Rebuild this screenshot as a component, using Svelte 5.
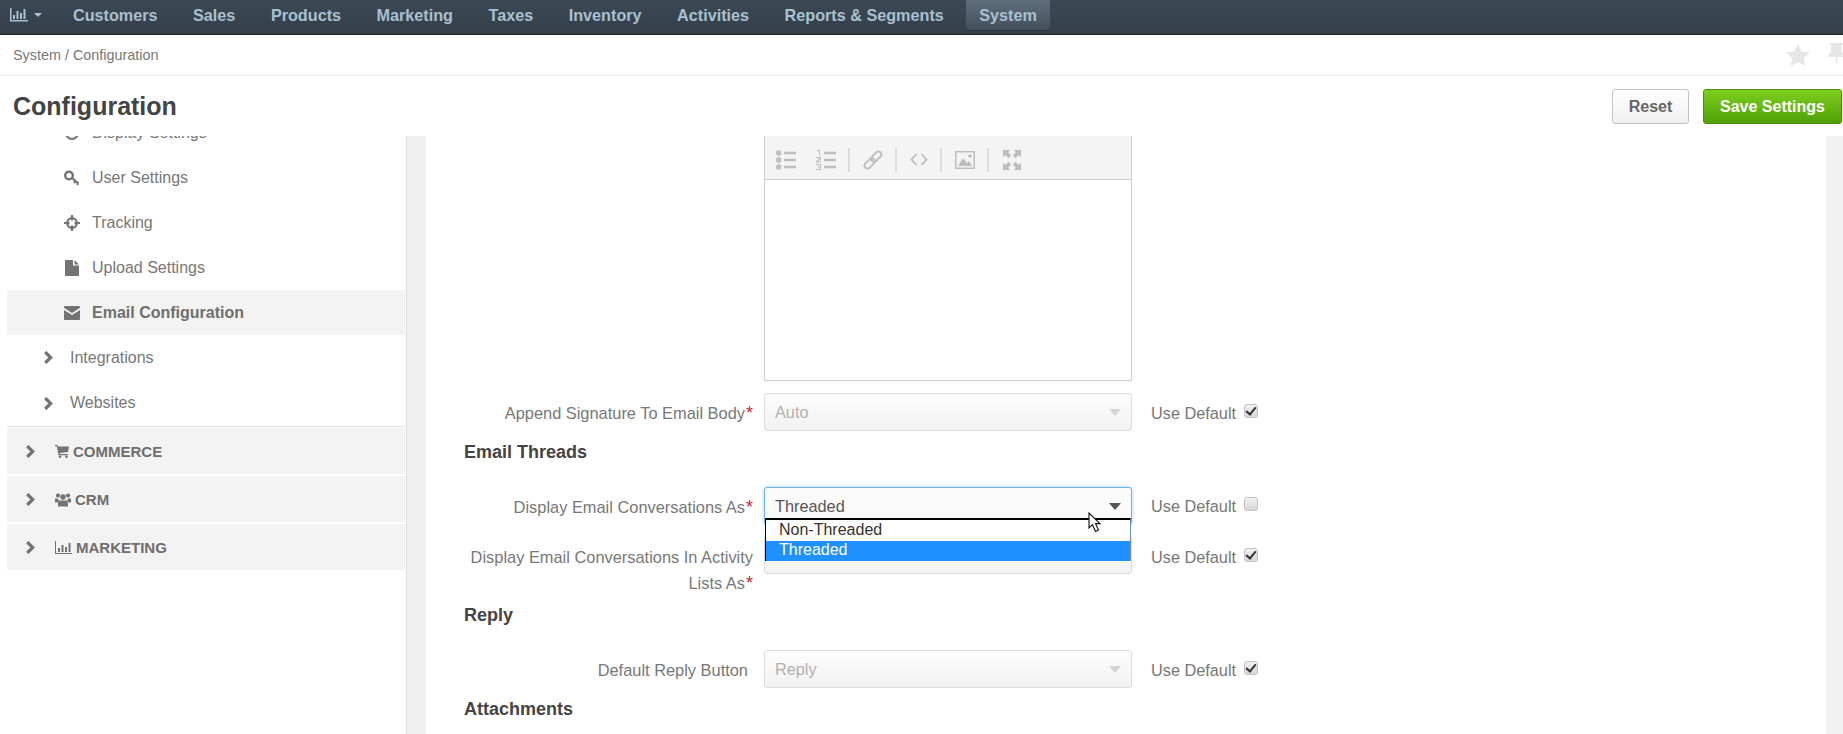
<script>
  const nav = ['Customers', 'Sales', 'Products', 'Marketing', 'Taxes', 'Inventory', 'Activities', 'Reports & Segments'];
</script>

<div class="page">
  <header class="topbar">
    <div class="brand">
      <svg width="19" height="16" viewBox="0 0 19 16" aria-hidden="true"><path d="M1 1h1.500v12H19v1.500H1z M4 8h2v4H4z M7.500 4h2v8h-2z M11 6h2v6h-2z M14.500 2h2v10h-2z" fill="#a9c2d3"/></svg>
      <span class="caret"></span>
    </div>
    <nav class="nav">
      {#each nav as item}
        <a class="nav-item">{item}</a>
      {/each}
      <a class="nav-item active">System</a>
    </nav>
  </header>

  <div class="crumbs">
    <span>System / Configuration</span>
    <div class="crumb-icons">
      <svg width="24" height="22" viewBox="0 0 24 22" aria-hidden="true"><path d="M12 0l3.500 7.400 8.200 1-6 5.600 1.600 8L12 18l-7.300 4 1.600-8-6-5.600 8.200-1z" fill="#e6e6e6"/></svg>
      <svg class="pin" width="16" height="24" viewBox="0 0 16 24" aria-hidden="true"><path d="M3 0h12v2h-1.500v7c2 1 3 3 3 5H9.500l-1 9-1-9H0c0-2 1-4 3-5V2H1.500V0z" fill="#e6e6e6"/></svg>
    </div>
  </div>

  <div class="titlebar">
    <h1>Configuration</h1>
    <div class="actions">
      <button class="btn reset">Reset</button>
      <button class="btn save">Save Settings</button>
    </div>
  </div>

  <div class="main">
    <aside class="sidebar">
      <div class="tree">
        <div class="leaf">
          <svg width="16" height="16" viewBox="0 0 16 16" aria-hidden="true"><circle cx="8" cy="8" r="6" fill="none" stroke="#737373" stroke-width="2"/></svg>
          <span>Display Settings</span>
        </div>
        <div class="leaf">
          <svg width="16" height="16" viewBox="0 0 16 16" aria-hidden="true"><circle cx="5" cy="5.500" r="3.800" fill="none" stroke="#737373" stroke-width="2.400"/><path d="M8 8l6.500 5.500M11.500 11l-1.500 2M14 13.300l-1 1.500" fill="none" stroke="#737373" stroke-width="2.200"/></svg>
          <span>User Settings</span>
        </div>
        <div class="leaf">
          <svg width="16" height="16" viewBox="0 0 16 16" aria-hidden="true"><circle cx="8" cy="8" r="4.800" fill="none" stroke="#737373" stroke-width="2.200"/><path d="M8 0v5.500M8 10.500V16M0 8h5.500M10.500 8H16" stroke="#737373" stroke-width="2.200"/></svg>
          <span>Tracking</span>
        </div>
        <div class="leaf">
          <svg width="16" height="16" viewBox="0 0 16 16" aria-hidden="true"><path d="M1 0h8v5.500h6V16H1zM10.500 0L15 4.500h-4.500z" fill="#737373"/></svg>
          <span>Upload Settings</span>
        </div>
        <div class="leaf current">
          <svg width="16" height="14" viewBox="0 0 16 14" aria-hidden="true"><path d="M1 0h14c.6 0 1 .4 1 1v.800L8 7 0 1.800V1c0-.6.4-1 1-1zM0 4l8 5 8-5v9c0 .6-.4 1-1 1H1c-.6 0-1-.4-1-1z" fill="#737373"/></svg>
          <span>Email Configuration</span>
        </div>
        <div class="branch">
          <svg class="chev" width="11" height="13" viewBox="0 0 10 12" aria-hidden="true"><path d="M2 1l5 5-5 5" fill="none" stroke="#737373" stroke-width="3"/></svg>
          <span>Integrations</span>
        </div>
        <div class="branch">
          <svg class="chev" width="11" height="13" viewBox="0 0 10 12" aria-hidden="true"><path d="M2 1l5 5-5 5" fill="none" stroke="#737373" stroke-width="3"/></svg>
          <span>Websites</span>
        </div>
      </div>

      <div class="section">
        <svg class="chev" width="11" height="13" viewBox="0 0 10 12" aria-hidden="true"><path d="M2 1l5 5-5 5" fill="none" stroke="#737373" stroke-width="3"/></svg>
        <svg class="sec-icon" width="14" height="13" viewBox="0 0 14 13" aria-hidden="true"><path d="M0 0h2.500l.5 1.500h11L13 7l-8.500 1 .3 1H13v1.300H3.500L1.800 1.300H0z" fill="#737373"/><circle cx="5" cy="11.700" r="1.300" fill="#737373"/><circle cx="11.500" cy="11.700" r="1.300" fill="#737373"/></svg>
        <span>COMMERCE</span>
      </div>
      <div class="section">
        <svg class="chev" width="11" height="13" viewBox="0 0 10 12" aria-hidden="true"><path d="M2 1l5 5-5 5" fill="none" stroke="#737373" stroke-width="3"/></svg>
        <svg class="sec-icon crm" width="16" height="15" viewBox="0 0 16 14" aria-hidden="true"><circle cx="3" cy="3" r="2.100" fill="#737373"/><circle cx="13" cy="3" r="2.100" fill="#737373"/><circle cx="8" cy="4.500" r="2.700" fill="#737373"/><path d="M0 6h3l1 3v1H0zM16 6h-3l-1 3v1h4zM4 8h8l1 3v3H3v-3z" fill="#737373"/></svg>
        <span>CRM</span>
      </div>
      <div class="section">
        <svg class="chev" width="11" height="13" viewBox="0 0 10 12" aria-hidden="true"><path d="M2 1l5 5-5 5" fill="none" stroke="#737373" stroke-width="3"/></svg>
        <svg class="sec-icon mkt" width="17" height="13" viewBox="0 0 17 13" aria-hidden="true"><path d="M0 0h1v12h16v1H0zM3 7h2v4H3zM6.500 4h2v7h-2zM10 6h2v5h-2zM13.500 2h2v9h-2z" fill="#737373"/></svg>
        <span>MARKETING</span>
      </div>
    </aside>

    <div class="splitter"></div>

    <section class="content">
      <div class="editor">
        <div class="toolbar">
          <svg class="t-icon" width="20" height="20" viewBox="0 0 20 20" aria-hidden="true"><circle cx="2.700" cy="3" r="2.700"/><circle cx="2.700" cy="10" r="2.700"/><circle cx="2.700" cy="17" r="2.700"/><path d="M8 1.700h12v2.600H8zM8 8.700h12v2.600H8zM8 15.700h12v2.600H8z"/></svg>
          <svg class="t-icon" width="20" height="20" viewBox="0 0 20 20" aria-hidden="true"><path d="M8 1.700h12v2.600H8zM8 8.700h12v2.600H8zM8 15.700h12v2.600H8zM1 0h3v5.500H3V1H1zM0 7h5v2.200L2 11.500h3v1H0v-1.300L3.800 8.300V8H0zM0 14h5v6H0v-1h3.800v-1.500H1.500v-1h2.300V15H0z"/></svg>
          <i class="sep"></i>
          <svg class="t-icon link" width="22" height="22" viewBox="0 0 22 22" aria-hidden="true"><g fill="none" stroke="#bdbdbd" stroke-width="1.800"><rect x="-5" y="-3" width="12" height="6" rx="3" transform="translate(7 15) rotate(-45)"/><rect x="-7" y="-3" width="12" height="6" rx="3" transform="translate(15 7) rotate(-45)"/></g></svg>
          <i class="sep"></i>
          <svg class="t-icon code" width="18" height="13" viewBox="0 0 18 13" aria-hidden="true"><path d="M6.500 1L1.500 6.500l5 5.500M11.500 1l5 5.500-5 5.500" fill="none" stroke="#bdbdbd" stroke-width="1.800"/></svg>
          <i class="sep"></i>
          <svg class="t-icon" width="20" height="18" viewBox="0 0 20 18" aria-hidden="true"><path fill-rule="evenodd" d="M0 0h20v18H0zM1.500 1.500v15h17v-15z"/><path d="M3 15l5-8 4 5 2-2 3 5z"/><circle cx="15" cy="5" r="1.800"/></svg>
          <i class="sep"></i>
          <svg class="t-icon" width="20" height="20" viewBox="0 0 20 22" aria-hidden="true"><path d="M0 0h8L5.800 2.200 9 6 6 9 2.500 5.500 0 8zM20 0h-8l2.200 2.200L11 6l3 3 3.500-3.500L20 8zM0 22h8l-2.200-2.200L9 16l-3-3-3.500 3.500L0 14zM20 22h-8l2.200-2.200L11 16l3-3 3.500 3.500L20 14z"/></svg>
        </div>
        <div class="edit-area"></div>
      </div>

      <div class="row first">
        <label class="lbl">Append Signature To Email Body<em>*</em></label>
        <div class="select disabled"><span>Auto</span><i class="arrow"></i></div>
        <div class="default">Use Default<span class="check on"></span></div>
      </div>

      <h3>Email Threads</h3>

      <div class="row tight">
        <label class="lbl">Display Email Conversations As<em>*</em></label>
        <div class="select focus">
          <span>Threaded</span><i class="arrow"></i>
          <div class="popup">
            <div class="opt">Non-Threaded</div>
            <div class="opt sel">Threaded</div>
          </div>
          <svg class="cursor" width="14" height="21" viewBox="0 0 14 21" aria-hidden="true"><path d="M1 1v15l3.500-3.300L7.500 19.500l3-1.400-3-6.500H12z" fill="#fff" stroke="#111" stroke-width="1.100"/></svg>
        </div>
        <div class="default">Use Default<span class="check"></span></div>
      </div>

      <div class="row wrapped">
        <label class="lbl">Display Email Conversations In Activity<br />Lists As<em>*</em></label>
        <div class="select disabled"></div>
        <div class="default">Use Default<span class="check on"></span></div>
      </div>

      <h3>Reply</h3>

      <div class="row">
        <label class="lbl plain">Default Reply Button</label>
        <div class="select disabled"><span>Reply</span><i class="arrow"></i></div>
        <div class="default">Use Default<span class="check on"></span></div>
      </div>

      <h3>Attachments</h3>
    </section>

    <div class="rail"></div>
  </div>
</div>

<style>
  :global(body) {
    margin: 0;
    background: #fff;
    font-family: "Liberation Sans", Arial, sans-serif;
  }
  .page {
    display: flex;
    flex-direction: column;
    height: 734px;
    width: 1843px;
    overflow: hidden;
    color: #777;
  }
  .topbar {
    display: flex;
    align-items: flex-start;
    height: 34px;
    flex: none;
    background: linear-gradient(#3b4853, #343f4a);
    border-bottom: 1px solid #20282f;
  }
  .brand {
    display: flex;
    align-items: center;
    gap: 6px;
    width: 60px;
    height: 30px;
    padding-left: 9px;
    box-sizing: border-box;
  }
  .caret {
    width: 0;
    height: 0;
    border: 4px solid transparent;
    border-top: 4px solid #a9c2d3;
    border-bottom: 0;
  }
  .nav {
    display: flex;
    align-items: center;
    height: 30px;
    gap: 9.500px;
  }
  .nav-item {
    padding: 0 13px;
    font-size: 16.200px;
    font-weight: 700;
    color: #a8c0d1;
    line-height: 30px;
    white-space: nowrap;
  }
  .nav-item.active {
    background: linear-gradient(#5f6e7c, #434f5b);
    box-shadow: 0 1px 0 #28313a;
    border-radius: 0 0 4px 4px;
  }
  .crumbs {
    flex: none;
    height: 40px;
    border-bottom: 1px solid #eeeeee;
    display: flex;
    align-items: center;
    justify-content: space-between;
    padding-left: 13px;
    font-size: 14.400px;
    color: #777;
  }
  .crumb-icons {
    display: flex;
    align-items: center;
    gap: 18px;
    margin-right: -1px;
  }
  .titlebar {
    flex: none;
    height: 60px;
    display: flex;
    align-items: center;
    justify-content: space-between;
    padding: 0 1px 0 13px;
  }
  h1 {
    margin: 1px 0 0;
    font-size: 25px;
    font-weight: 700;
    color: #444;
  }
  .actions {
    display: flex;
    gap: 14px;
    margin-top: 1px;
  }
  .btn {
    height: 35px;
    border-radius: 3px;
    font-family: inherit;
    font-size: 16px;
    font-weight: 700;
    padding: 0;
  }
  .reset {
    width: 77px;
    border: 1px solid #c4c4c4;
    background: linear-gradient(#ffffff, #f0f0f0);
    color: #666;
  }
  .save {
    width: 139px;
    border: 1px solid #4a8f0b;
    background: linear-gradient(#7dd01c, #4fa009);
    color: #fff;
  }
  .main {
    flex: 1;
    display: flex;
    min-height: 0;
    overflow: hidden;
  }
  .sidebar {
    width: 406px;
    flex: none;
    overflow: hidden;
    padding: 0 1px 0 7px;
    box-sizing: border-box;
    font-size: 16px;
    color: #777;
  }
  .tree {
    margin-top: -26px;
    border-bottom: 1px solid #e6e6e6;
  }
  .leaf,
  .branch {
    height: 45px;
    display: flex;
    align-items: center;
  }
  .leaf {
    padding-left: 57px;
    gap: 12px;
  }
  .leaf svg {
    width: 16px;
    flex: none;
  }
  .current {
    background: #f3f3f3;
    font-weight: 700;
    color: #6e6e6e;
  }
  .branch {
    padding-left: 36px;
    gap: 16px;
    height: 45.500px;
  }
  .section {
    height: 46px;
    margin-bottom: 2px;
    margin-top: 1px;
    background: #f3f3f3;
    display: flex;
    align-items: center;
    padding-left: 18px;
    font-size: 15px;
    font-weight: 700;
    color: #6e6e6e;
  }
  .section .chev {
    margin-right: 19px;
  }
  .sec-icon {
    margin-right: 4px;
  }
  .splitter {
    width: 19px;
    flex: none;
    background: #f0f0f0;
    border-left: 1px solid #dedede;
  }
  .content {
    flex: 1;
    padding-left: 38px;
    min-width: 0;
  }
  .editor {
    width: 368px;
    margin-left: 300px;
    height: 245px;
    box-sizing: border-box;
    border: 1px solid #cfcfcf;
    border-top: 0;
    display: flex;
    flex-direction: column;
  }
  .toolbar {
    height: 44px;
    flex: none;
    box-sizing: border-box;
    background: #f4f4f4;
    border-bottom: 1px solid #cfcfcf;
    display: flex;
    align-items: center;
    padding: 4px 0 0 11px;
  }
  .t-icon {
    fill: #bdbdbd;
    flex: none;
    margin-right: 20px;
  }
  .t-icon:nth-child(2) {
    margin-right: 12px;
  }
  .t-icon.link {
    margin: 0 11px 0 12px;
  }
  .t-icon.code {
    margin: 0 12px 0 13px;
  }
  .sep + .t-icon:not(.link):not(.code) {
    margin: 0 12px 0 13px;
  }
  .sep {
    width: 2px;
    height: 24px;
    background: #dcdcdc;
    flex: none;
  }
  .edit-area {
    flex: 1;
    background: #fff;
  }
  .row {
    display: flex;
    align-items: flex-start;
  }
  .row.first {
    margin-top: 12px;
  }
  .row.tight {
    margin-bottom: 11px;
  }
  .row.tight .default {
    padding-top: 6px;
  }
  .row.wrapped {
    margin-bottom: -2px;
  }
  .row.wrapped .lbl,
  .row.wrapped .default {
    padding-top: 8px;
  }
  .lbl {
    width: 289px;
    margin-right: 11px;
    padding-top: 7px;
    text-align: right;
    font-size: 16.400px;
    line-height: 26px;
    color: #777;
    flex: none;
    box-sizing: border-box;
  }
  .lbl.plain {
    padding-right: 5px;
  }
  .lbl em {
    font-style: normal;
    font-size: 18px;
    line-height: 16px;
    margin-left: 1px;
    color: #c81e28;
  }
  .select {
    position: relative;
    width: 368px;
    height: 38px;
    flex: none;
    box-sizing: border-box;
    border: 1px solid #dcdcdc;
    border-radius: 3px;
    background: linear-gradient(#fdfdfd, #f2f2f2);
    display: flex;
    align-items: center;
    padding-left: 10px;
    font-size: 16.300px;
    color: #b0b0b0;
  }
  .arrow {
    position: absolute;
    right: 10px;
    top: 15px;
    border: 6px solid transparent;
    border-top: 7px solid #d4d4d4;
    border-bottom: 0;
  }
  .focus {
    border-color: #6fb2e8;
    box-shadow: 0 0 4px #a9d3f3;
    color: #555;
    background: #fafafa;
  }
  .focus .arrow {
    border-top-color: #555;
  }
  .popup {
    position: absolute;
    z-index: 2;
    left: 0;
    right: 0;
    top: 30px;
    border-top: 2px solid #000;
    border-left: 1px solid #000;
    border-right: 1px solid #6d8fb3;
    background: #fff;
    color: #333;
    font-size: 16px;
  }
  .opt {
    height: 20.500px;
    line-height: 20px;
    padding-left: 13px;
  }
  .opt.sel {
    background: #1e90ff;
    color: #fff;
    line-height: 18px;
  }
  .cursor {
    position: absolute;
    z-index: 3;
    left: 323px;
    top: 24px;
  }
  .default {
    display: flex;
    align-items: flex-start;
    padding-top: 7px;
    margin-left: 19px;
    font-size: 16.300px;
    line-height: 26px;
    color: #777;
  }
  .check {
    position: relative;
    display: block;
    width: 14px;
    height: 14px;
    margin: 4px 0 0 8px;
    box-sizing: border-box;
    border: 1px solid #c2c2c2;
    border-radius: 3px;
    background: linear-gradient(#f1f1f1, #d8d8d8);
  }
  .check.on::after {
    content: "";
    position: absolute;
    left: 3px;
    top: 0;
    width: 4px;
    height: 8px;
    border: solid #333;
    border-width: 0 2px 2px 0;
    transform: rotate(40deg);
  }
  h3 {
    margin: 9px 0 23px;
    font-size: 18px;
    line-height: 24px;
    font-weight: 700;
    color: #444;
  }
  .rail {
    width: 17px;
    flex: none;
    background: #f1f1f1;
  }
</style>
